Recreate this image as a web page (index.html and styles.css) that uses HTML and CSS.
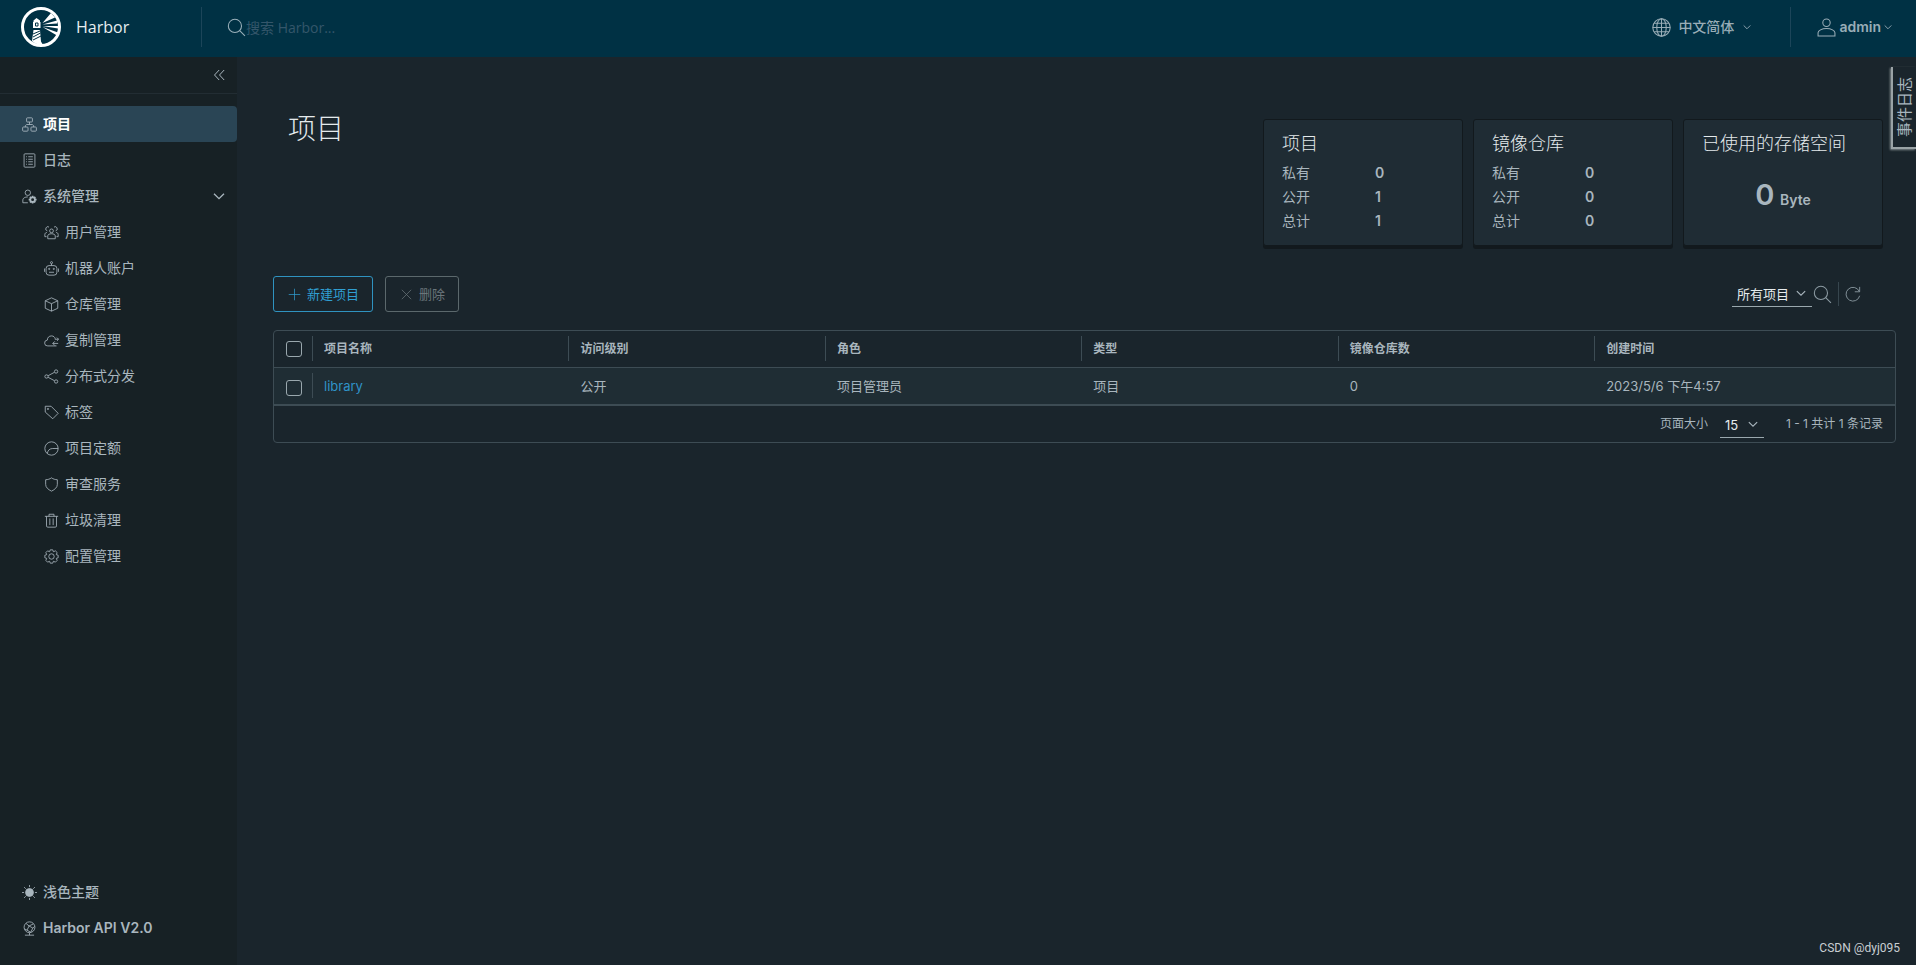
FILE: index.html
```html
<!DOCTYPE html>
<html lang="zh-CN">
<head>
<meta charset="utf-8">
<title>Harbor</title>
<link rel="stylesheet" href="styles.css">
</head>
<body>
<svg class="sprite" aria-hidden="true">
  <symbol id="i-search" viewBox="0 0 36 36"><circle cx="15" cy="15" r="12.500"/><path d="M24 24 34 34"/></symbol>
  <symbol id="i-angle" viewBox="0 0 36 36"><path d="M3 11 18 26 33 11"/></symbol>
  <symbol id="i-globe" viewBox="0 0 36 36"><circle cx="18" cy="18" r="16.500"/><ellipse cx="18" cy="18" rx="9" ry="16.500"/><path d="M18 1.500v33M1.500 18h33M4 10h28M4 26h28"/></symbol>
  <symbol id="i-user" viewBox="0 0 36 36"><circle cx="18" cy="9" r="7"/><path d="M2 34v-6c0-4 7-8 16-8s16 4 16 8v6z"/></symbol>
  <symbol id="i-collapse" viewBox="0 0 36 36"><path d="M17 3 3 18l14 15M32 3 18 18l14 15"/></symbol>
  <symbol id="i-projects" viewBox="0 0 36 36"><rect x="11" y="2" width="14" height="10" rx="2"/><rect x="1.500" y="24" width="13" height="10" rx="2"/><rect x="21.500" y="24" width="13" height="10" rx="2"/><path d="M18 12v6M8 24v-3l3-3h14l3 3v3"/></symbol>
  <symbol id="i-logs" viewBox="0 0 36 36"><rect x="5" y="2" width="26" height="32" rx="2"/><path d="M10 9h2M15 9h11M10 15h2M15 15h11M10 21h2M15 21h11M10 27h2M15 27h11"/></symbol>
  <symbol id="i-admin" viewBox="0 0 36 36"><circle cx="14" cy="9" r="6.500"/><path d="M14 33H2v-7c0-4 5-7 12-7"/><circle cx="25.500" cy="25.500" r="5.500" stroke-width="4"/><path stroke-width="4" d="M25.500 16v4M25.500 31v4M16 25.500h4M31 25.500h4M19 19l3 3M29 29l3 3M32 19l-3 3M22 29l-3 3"/></symbol>
  <symbol id="i-users" viewBox="0 0 36 36"><circle cx="18" cy="14" r="4.500"/><path d="M9 33v-7c0-3 4-5 9-5s9 2 9 5v7zM8 14a5 5 0 1 1 4-9M28 14a5 5 0 1 0-4-9M7 18c-3 0-5 2-5 5v5h4M29 18c3 0 5 2 5 5v5h-4"/></symbol>
  <symbol id="i-robot" viewBox="0 0 36 36"><rect x="5" y="11" width="26" height="23" rx="7"/><circle cx="18" cy="4" r="2.500"/><path d="M18 6.500V11M1 18v8M35 18v8M12 27h12"/><circle cx="12.500" cy="19" r="1.500"/><circle cx="23.500" cy="19" r="1.500"/></symbol>
  <symbol id="i-cube" viewBox="0 0 36 36"><path d="M18 2 33 9v18l-15 7-15-7V9zM3 9l15 7 15-7M18 16v18"/></symbol>
  <symbol id="i-cloud" viewBox="0 0 36 36"><path d="M30 31H9a7 7 0 0 1-1-14c0-6 4-10 10-10 5 0 8 3 9 7M26 15h9M31 11l4 4-4 4M34 25H21M26 20l-5 5 5 5"/></symbol>
  <symbol id="i-share" viewBox="0 0 36 36"><circle cx="6" cy="18" r="4"/><circle cx="29" cy="6" r="4"/><circle cx="29" cy="30" r="4"/><path d="M10 16 25 8M10 20l15 8"/></symbol>
  <symbol id="i-tag" viewBox="0 0 36 36"><path d="M3 3h14l17 17-13 13L3 17z"/><circle cx="9.500" cy="9.500" r="1.500"/></symbol>
  <symbol id="i-quota" viewBox="0 0 36 36"><circle cx="18" cy="18" r="16"/><path d="M8 30c1-8 6-12 13-12h13"/></symbol>
  <symbol id="i-shield" viewBox="0 0 36 36"><path d="M18 2c4 3 9 4.500 14 4.500V18c0 7-6 12-14 16C10 30 4 25 4 18V6.500C9 6.500 14 5 18 2z"/></symbol>
  <symbol id="i-trash" viewBox="0 0 36 36"><path d="M2 8h32M6 8v23q0 3 3 3h18q3 0 3-3V8M12 8V3h12v5M14 13v16M22 13v16"/></symbol>
  <symbol id="i-cog" viewBox="0 0 36 36"><circle cx="18" cy="18" r="6.500"/><path d="M15 2h6l1.500 4.500 5-2 4 4-2 5L34 15v6l-4.500 1.500 2 5-4 4-5-2L21 34h-6l-1.500-4.500-5 2-4-4 2-5L2 21v-6l4.500-1.500-2-5 4-4 5 2z"/></symbol>
  <symbol id="i-sun" viewBox="0 0 36 36"><circle cx="18" cy="18" r="9.500" fill="currentColor"/><path d="M18 0v5M18 31v5M0 18h5M31 18h5M5 5l4 4M27 27l4 4M31 5l-4 4M9 27l-4 4"/></symbol>
  <symbol id="i-api" viewBox="0 0 36 36"><circle cx="18" cy="15" r="13"/><path d="M7 34h22M18 28v6M10 6l7 6 10-5M17 12l-5 10-6-3M12 22l9 5 5-10-9-5M26 17l4-4"/></symbol>
  <symbol id="i-plus" viewBox="0 0 36 36"><path d="M18 2v32M2 18h32"/></symbol>
  <symbol id="i-close" viewBox="0 0 36 36"><path d="M5 5l26 26M31 5 5 31"/></symbol>
  <symbol id="i-refresh" viewBox="0 0 36 36"><path d="M32 12A15.500 15.500 0 1 0 33 22M33 2v11H22"/></symbol>
</svg>

<header class="header">
  <a class="brand" href="#">
    <svg class="logo" viewBox="0 0 40 40" aria-hidden="true">
      <circle class="ring" cx="20" cy="20" r="18.500"/>
      <path class="solid" d="M15.500 11 19 13.500v1.500h.500v6h-7.500v-6h.500v-1.500zM12.500 23h6.500l1 11.500 2 3.500q-7 0-11-4z"/>
      <path class="cut" d="M14.500 16h2.500v3h-2.500zM12 27l7-3M12 30l7.500-4M12 33l8-4"/>
      <path class="solid" d="M21.500 16 30 6l4 4.500zM21.500 17.500 36 13.500v3zM21.500 19 37 19v2.500zM21.500 20 37 25.500l-1 3z"/>
    </svg>
    <span>Harbor</span>
  </a>
  <label class="search">
    <svg class="icon"><use href="#i-search"/></svg>
    <input type="text" placeholder="搜索 Harbor..." aria-label="搜索 Harbor">
  </label>
  <button class="head-btn lang" type="button">
    <svg class="icon"><use href="#i-globe"/></svg><span>中文简体</span><svg class="caret"><use href="#i-angle"/></svg>
  </button>
  <button class="head-btn account" type="button">
    <svg class="icon"><use href="#i-user"/></svg><span>admin</span><svg class="caret"><use href="#i-angle"/></svg>
  </button>
</header>

<div class="body">
  <nav class="sidebar">
    <button class="collapse" type="button" aria-label="收起"><svg><use href="#i-collapse"/></svg></button>
    <div class="nav-list">
      <a class="nav-item active" href="#"><svg><use href="#i-projects"/></svg>项目</a>
      <a class="nav-item" href="#"><svg><use href="#i-logs"/></svg>日志</a>
      <button class="nav-item" type="button" aria-expanded="true"><svg><use href="#i-admin"/></svg>系统管理<svg class="expand"><use href="#i-angle"/></svg></button>
      <a class="nav-item sub" href="#"><svg><use href="#i-users"/></svg>用户管理</a>
      <a class="nav-item sub" href="#"><svg><use href="#i-robot"/></svg>机器人账户</a>
      <a class="nav-item sub" href="#"><svg><use href="#i-cube"/></svg>仓库管理</a>
      <a class="nav-item sub" href="#"><svg><use href="#i-cloud"/></svg>复制管理</a>
      <a class="nav-item sub" href="#"><svg><use href="#i-share"/></svg>分布式分发</a>
      <a class="nav-item sub" href="#"><svg><use href="#i-tag"/></svg>标签</a>
      <a class="nav-item sub" href="#"><svg><use href="#i-quota"/></svg>项目定额</a>
      <a class="nav-item sub" href="#"><svg><use href="#i-shield"/></svg>审查服务</a>
      <a class="nav-item sub" href="#"><svg><use href="#i-trash"/></svg>垃圾清理</a>
      <a class="nav-item sub" href="#"><svg><use href="#i-cog"/></svg>配置管理</a>
    </div>
    <div class="nav-foot">
      <button class="nav-item" type="button"><svg><use href="#i-sun"/></svg>浅色主题</button>
      <a class="nav-item" href="#"><svg><use href="#i-api"/></svg>Harbor API V2.0</a>
    </div>
  </nav>

  <main class="main">
    <div class="top">
      <h1>项目</h1>
      <section class="card">
        <h2>项目</h2>
        <dl><dt>私有</dt><dd>0</dd><dt>公开</dt><dd>1</dd><dt>总计</dt><dd>1</dd></dl>
      </section>
      <section class="card">
        <h2>镜像仓库</h2>
        <dl><dt>私有</dt><dd>0</dd><dt>公开</dt><dd>0</dd><dt>总计</dt><dd>0</dd></dl>
      </section>
      <section class="card">
        <h2>已使用的存储空间</h2>
        <p class="storage"><span class="amount">0</span> Byte</p>
      </section>
    </div>

    <div class="toolbar">
      <button class="btn primary" type="button"><svg><use href="#i-plus"/></svg>新建项目</button>
      <button class="btn" type="button" disabled><svg><use href="#i-close"/></svg>删除</button>
      <div class="filters">
        <div class="select filter">
          <select aria-label="项目筛选"><option>所有项目</option></select>
          <svg><use href="#i-angle"/></svg>
        </div>
        <button class="tool" type="button" aria-label="搜索"><svg><use href="#i-search"/></svg></button>
        <button class="tool refresh" type="button" aria-label="刷新"><svg><use href="#i-refresh"/></svg></button>
      </div>
    </div>

    <div class="datagrid">
      <table>
        <colgroup><col class="c-check"><col class="c-data"><col class="c-data"><col class="c-data"><col class="c-data"><col class="c-data"><col></colgroup>
        <thead>
          <tr><th><input type="checkbox" aria-label="全选"></th><th>项目名称</th><th>访问级别</th><th>角色</th><th>类型</th><th>镜像仓库数</th><th>创建时间</th></tr>
        </thead>
        <tbody>
          <tr><td><input type="checkbox" aria-label="选择 library"></td><td><a href="#">library</a></td><td>公开</td><td>项目管理员</td><td>项目</td><td>0</td><td>2023/5/6 下午4:57</td></tr>
        </tbody>
      </table>
      <div class="grid-foot">
        <label for="size">页面大小</label>
        <div class="select size">
          <select id="size"><option>15</option></select>
          <svg><use href="#i-angle"/></svg>
        </div>
        <span>1 - 1 共计 1 条记录</span>
      </div>
    </div>
  </main>
</div>

<button class="event-log" type="button"><span>事件日志</span></button>
<span class="credit">CSDN @dyj095</span>
</body>
</html>
```
FILE: styles.css
```css
* { box-sizing: border-box; }

body {
  margin: 0;
  min-height: 100vh;
  display: flex;
  flex-direction: column;
  position: relative;
  background: #1a252c;
  color: #a9b6be;
  font: 14px/24px Inter, "Noto Sans CJK SC", sans-serif;
}

button, input, select { font: inherit; color: inherit; }
button { background: none; border: 0; padding: 0; cursor: pointer; }
a { color: inherit; text-decoration: none; }
h1, h2, p, dl, dd { margin: 0; }

svg { fill: none; stroke: currentColor; stroke-width: 2; flex: none; }
.sprite { position: absolute; width: 0; height: 0; }

.header {
  height: 57px;
  display: flex;
  align-items: center;
  padding-bottom: 3px;
  background: #003144;
}
.brand {
  display: flex;
  align-items: center;
  gap: 15px;
  width: 201px;
  padding-left: 21px;
  color: #e8eef0;
  font: 16px/24px "Open Sans", sans-serif;
}
.logo { width: 40px; height: 40px; stroke: none; }
.logo .ring { stroke: #fff; stroke-width: 3; }
.logo .solid { fill: #fff; }
.logo .cut { stroke: #003144; stroke-width: 1; }

.search {
  flex: 1;
  height: 40px;
  display: flex;
  align-items: center;
  border-left: 1px solid #1c4559;
  padding-left: 25px;
  color: #9ab0ba;
}
.search input {
  width: 240px;
  padding: 2px 0 0;
  border: 0;
  background: none;
  outline: 0;
  font-family: "Open Sans", "Noto Sans CJK SC", sans-serif;
}
.search input::placeholder { color: #34566a; opacity: 1; }
.icon { width: 19px; height: 19px; }
.caret { width: 8px; height: 8px; stroke-width: 4; }

.head-btn {
  height: 40px;
  display: flex;
  align-items: center;
  color: #99adb7;
  font-weight: 500;
}
.lang { gap: 7px; padding-right: 39px; }
.lang .caret { margin-left: 2px; }
.account { border-left: 1px solid #1c4559; gap: 3px; padding: 0 24px 0 26px; font-weight: 600; }

.body { flex: 1; display: flex; }

.sidebar {
  width: 237px;
  flex: none;
  display: flex;
  flex-direction: column;
  padding-bottom: 19px;
  background: #172125;
}
.collapse {
  height: 37px;
  display: flex;
  justify-content: flex-end;
  align-items: center;
  padding-right: 11px;
  border-bottom: 1px solid #222d33;
}
.collapse svg { width: 13px; height: 12px; stroke-width: 3; }
.nav-list { flex: 1; padding-top: 12px; }
.nav-item {
  width: 100%;
  height: 36px;
  display: flex;
  align-items: center;
  gap: 6px;
  padding: 0 12px 0 22px;
  font-weight: 500;
  text-align: left;
}
.nav-item svg { width: 15px; height: 15px; }
.nav-item .expand { width: 12px; height: 12px; margin-left: auto; stroke-width: 4; }
.nav-item.active {
  background: #2a4555;
  border-radius: 0 4px 4px 0;
  color: #fff;
  font-weight: 700;
}
.nav-item.active svg { color: #adbbc4; }
.nav-item.sub { padding-left: 44px; font-weight: 400; }
.nav-foot a.nav-item { font-weight: 600; }

.main { flex: 1; min-width: 0; padding: 62px 20px 24px 36px; }

.top { display: flex; gap: 10px; padding-right: 13px; }
h1 {
  flex: 1;
  margin-top: -10px;
  padding-left: 15px;
  color: #e4eaec;
  font-size: 28px;
  font-weight: 200;
  line-height: 40px;
}
.card {
  width: 200px;
  height: 127px;
  padding: 12px 18px;
  border: 1px solid #12191d;
  border-radius: 3px;
  box-shadow: 0 3px 0 #12191d;
  background: #1f2c34;
}
h2 {
  color: #e4eaec;
  font-size: 18px;
  font-weight: 300;
  line-height: 24px;
}
dl {
  display: grid;
  grid-template-columns: 93px 1fr;
  padding-top: 5px;
}
dd { font-weight: 600; }
.storage { padding-top: 19px; text-align: center; font-weight: 600; line-height: 40px; }
.amount { margin-right: 2px; font-size: 29px; }

.toolbar { display: flex; align-items: center; gap: 12px; padding: 30px 35px 18px 0; }
.btn {
  height: 36px;
  display: flex;
  align-items: center;
  gap: 6px;
  padding: 0 13px 0 14px;
  border: 1px solid #5b686c;
  border-radius: 3px;
  color: #6b767b;
  font-size: 13px;
}
.btn svg { width: 13px; height: 13px; }
.primary { border-color: #2f93c0; color: #309fd2; }
.btn:disabled { cursor: default; }
.filters { display: flex; align-items: center; margin-left: auto; }

.select { position: relative; border-bottom: 1px solid #9aa8ae; color: #e6ecee; }
.select select {
  width: 100%;
  height: 22px;
  padding: 0 5px;
  border: 0;
  outline: 0;
  background: none;
  appearance: none;
}
.select svg {
  position: absolute;
  right: 6px;
  top: 6px;
  width: 10px;
  height: 10px;
  stroke-width: 4;
  color: #a9b6be;
  pointer-events: none;
}
.filter { width: 80px; font-size: 13px; }
.tool { height: 24px; display: flex; align-items: center; padding-left: 1px; color: #8c9ba3; }
.tool svg { width: 19px; height: 19px; }
.refresh { margin-left: 6px; padding-left: 6px; border-left: 1px solid #37464e; }
.refresh svg { width: 16px; height: 16px; }

.datagrid { border: 1px solid #3d4c54; border-radius: 4px; }
table {
  width: 100%;
  table-layout: fixed;
  border-collapse: collapse;
  font-size: 13px;
}
.c-check { width: 38px; }
.c-data { width: 15.82%; }
th, td { height: 38px; padding: 0 0 0 12px; text-align: left; }
th { height: 36px; font-size: 12px; font-weight: 600; }
th + th, td:nth-child(2) {
  background: linear-gradient(#3d4c54, #3d4c54) 0 50% / 1px 25px no-repeat;
}
td { font-weight: 400; }
tbody tr {
  background: #1f2d34;
  border-top: 1px solid #3d4c54;
  border-bottom: 2px solid #3d4c54;
}
td a { color: #2f93c8; }
input[type="checkbox"] {
  display: block;
  width: 16px;
  height: 16px;
  margin: 0;
  appearance: none;
  border: 1px solid #9aa8ae;
  border-radius: 3px;
}
td input[type="checkbox"] { margin-top: 4px; }

.grid-foot {
  height: 36px;
  display: flex;
  align-items: center;
  justify-content: flex-end;
  padding-right: 12px;
  font-size: 12px;
}
.size { width: 44px; margin: 2px 22px 0 12px; font-size: 13px; }

.event-log {
  position: absolute;
  top: 67px;
  right: 0;
  width: 25px;
  height: 82px;
  border-left: 2px solid #9aa3a6;
  border-bottom: 2px solid #9aa3a6;
  box-shadow: -1px 1px 2px #7f898c;
  background: #1a252c;
  font-size: 15px;
}
.event-log span {
  display: block;
  writing-mode: vertical-rl;
  text-orientation: sideways;
  transform: rotate(180deg);
}

.credit {
  position: absolute;
  right: 16px;
  bottom: 8px;
  color: #c9cfd2;
  font: 12px/18px Roboto, sans-serif;
}
```
